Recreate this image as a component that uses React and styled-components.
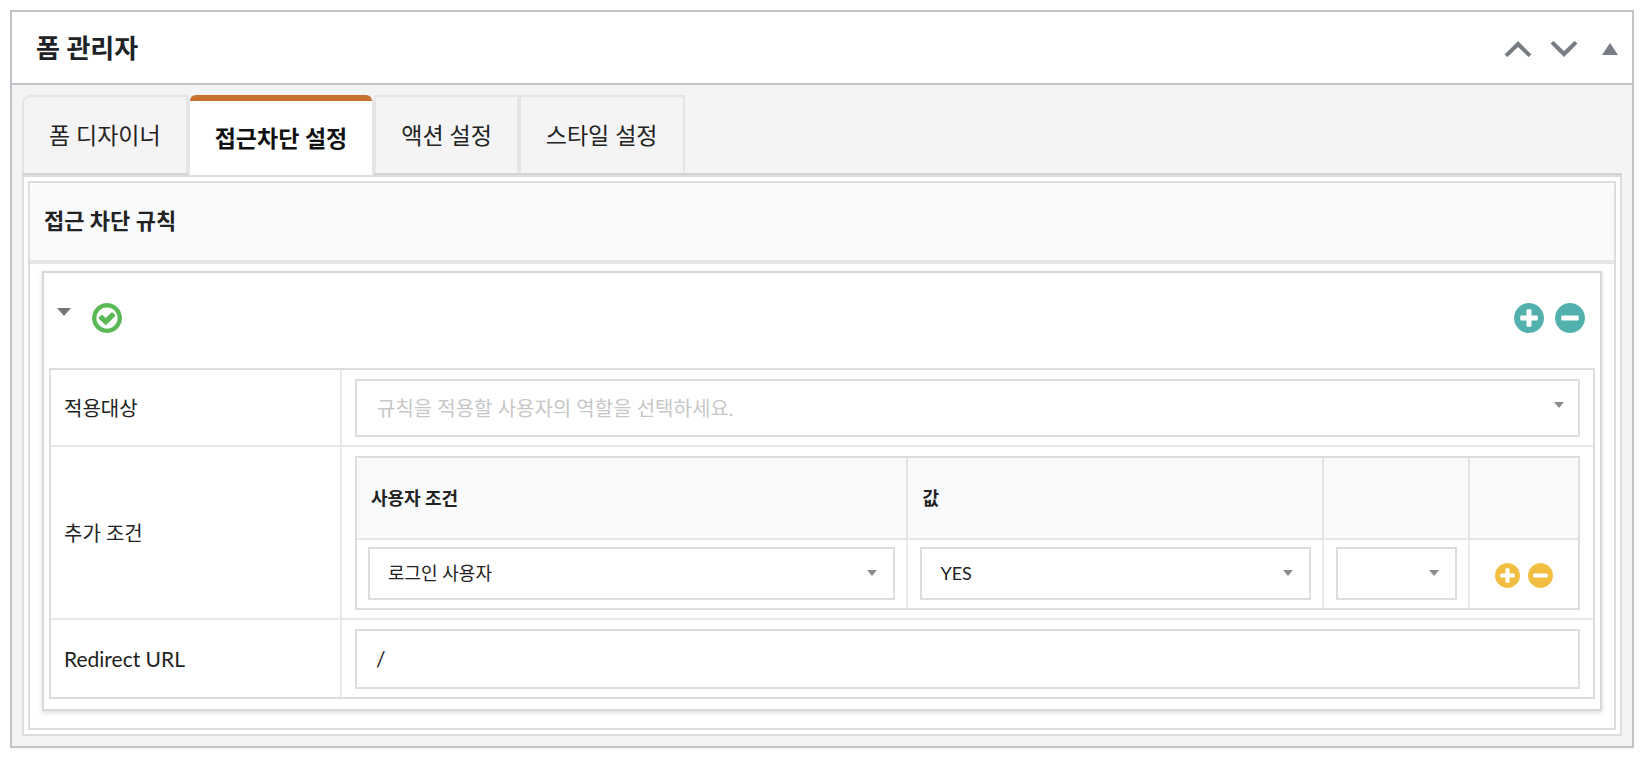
import React, { useState } from 'react';
import styled, { createGlobalStyle, css } from 'styled-components';

const TABS = ['폼 디자이너', '접근차단 설정', '액션 설정', '스타일 설정'];

const CIRCLE = 'q0 209-103 385.5t-279.5 279.5-385.5 103-385.5-103-279.5-279.5-103-385.5 103-385.5 279.5-279.5 385.5-103 385.5 103 279.5 279.5 103 385.5z';
const PLUS = 'M1344 960v-128q0-26-19-45t-45-19h-256v-256q0-26-19-45t-45-19h-128q-26 0-45 19t-19 45v256h-256q-26 0-45 19t-19 45v128q0 26 19 45t45 19h256v256q0 26 19 45t45 19h128q26 0 45-19t19-45v-256h256q26 0 45-19t19-45zm320-64' + CIRCLE;
const MINUS = 'M1344 960v-128q0-26-19-45t-45-19h-768q-26 0-45 19t-19 45v128q0 26 19 45t45 19h768q26 0 45-19t19-45zm320-64' + CIRCLE;
const CHECK = 'M1299 813l-422 422q-19 19-45 19t-45-19l-294-294q-19-19-19-45t19-45l102-102q19-19 45-19t45 19l147 147 275-275q19-19 45-19t45 19l102 102q19 19 19 45t-19 45zm141 83q0-148-73-273t-198-198-273-73-273 73-198 198-73 273 73 273 198 198 273 73 273-73 198-198 73-273zm224 0' + CIRCLE;

const RoundIcon = ({ path, size }) => (
    <svg width={size} height={size} viewBox="128 128 1536 1536" fill="currentColor" aria-hidden="true">
        <path d={path} />
    </svg>
);

const Dropdown = ({ id, label, large, placeholder, options }) => {
    const [value, setValue] = useState(placeholder ? '' : options[0]);

    return (
        <SelectWrap>
            <Select
                id={id}
                aria-label={label}
                $large={large}
                $empty={Boolean(placeholder) && value === ''}
                value={value}
                onChange={(event) => setValue(event.target.value)}
            >
                {placeholder && <option value="" disabled>{placeholder}</option>}
                {options.map((option) => (
                    <option key={option} value={option}>{option}</option>
                ))}
            </Select>
            <Caret $large={large} viewBox="0 0 10 6" aria-hidden="true">
                <path d="M0 0h10L5 6z" />
            </Caret>
        </SelectWrap>
    );
};

const App = () => {
    const [activeTab, setActiveTab] = useState(1);
    const [redirectUrl, setRedirectUrl] = useState('/');

    return (
        <>
            <GlobalStyle />
            <PostBox>
                <BoxHeader>
                    <BoxTitle>폼 관리자</BoxTitle>
                    <HandleActions>
                        <HandleButton type="button" aria-label="위로 이동">
                            <svg width="28" height="16" viewBox="0 0 28 16" fill="currentColor">
                                <path d="M14 0l13.5 13.5-3 2.5L14 6 3.500 16l-3-2.500z" />
                            </svg>
                        </HandleButton>
                        <HandleButton type="button" aria-label="아래로 이동">
                            <svg width="28" height="16" viewBox="0 0 28 16" fill="currentColor">
                                <path d="M14 16l13.500-13.500-3-2.500L14 10 3.500 0l-3 2.500z" />
                            </svg>
                        </HandleButton>
                        <HandleButton type="button" aria-label="접기">
                            <svg width="16" height="12" viewBox="0 0 16 12" fill="currentColor">
                                <path d="M8 0l8 12H0z" />
                            </svg>
                        </HandleButton>
                    </HandleActions>
                </BoxHeader>
                <BoxBody>
                    <TabMenu role="tablist">
                        {TABS.map((tab, index) => (
                            <Tab
                                key={tab}
                                type="button"
                                role="tab"
                                aria-selected={index === activeTab}
                                $active={index === activeTab}
                                onClick={() => setActiveTab(index)}
                            >
                                {tab}
                            </Tab>
                        ))}
                    </TabMenu>
                    <TabPanel role="tabpanel">
                        <RuleBox>
                            <RuleTitle>접근 차단 규칙</RuleTitle>
                            <RuleContent>
                                <Card>
                                    <CardHeader>
                                        <CardButtons $gap={21}>
                                            <IconButton type="button" aria-label="규칙 접기" $color="#767676">
                                                <CollapseIcon viewBox="0 0 14 8" aria-hidden="true">
                                                    <path d="M0 0h14L7 8z" />
                                                </CollapseIcon>
                                            </IconButton>
                                            <IconButton type="button" aria-label="규칙 사용" $color="#5bb955">
                                                <RoundIcon path={CHECK} size={30} />
                                            </IconButton>
                                        </CardButtons>
                                        <CardButtons $gap={11}>
                                            <IconButton type="button" aria-label="규칙 추가" $color="#53b1ad">
                                                <RoundIcon path={PLUS} size={30} />
                                            </IconButton>
                                            <IconButton type="button" aria-label="규칙 삭제" $color="#53b1ad">
                                                <RoundIcon path={MINUS} size={30} />
                                            </IconButton>
                                        </CardButtons>
                                    </CardHeader>
                                    <FieldTable>
                                        <tbody>
                                            <tr>
                                                <LabelCell scope="row"><label htmlFor="roles">적용대상</label></LabelCell>
                                                <FieldCell>
                                                    <Dropdown
                                                        id="roles"
                                                        large
                                                        placeholder="규칙을 적용할 사용자의 역할을 선택하세요."
                                                        options={['관리자', '구독자']}
                                                    />
                                                </FieldCell>
                                            </tr>
                                            <tr>
                                                <LabelCell scope="row">추가 조건</LabelCell>
                                                <FieldCell>
                                                    <ConditionTable>
                                                        <colgroup>
                                                            <Col $width="45%" />
                                                            <Col />
                                                            <Col $width="146px" />
                                                            <Col $width="110px" />
                                                        </colgroup>
                                                        <thead>
                                                            <tr>
                                                                <ConditionHead scope="col">사용자 조건</ConditionHead>
                                                                <ConditionHead scope="col">값</ConditionHead>
                                                                <ConditionHead as="td" />
                                                                <ConditionHead as="td" />
                                                            </tr>
                                                        </thead>
                                                        <tbody>
                                                            <tr>
                                                                <ConditionCell>
                                                                    <Dropdown label="사용자 조건" options={['로그인 사용자', '사용자 역할']} />
                                                                </ConditionCell>
                                                                <ConditionCell>
                                                                    <Dropdown label="값" options={['YES', 'NO']} />
                                                                </ConditionCell>
                                                                <ConditionCell>
                                                                    <Dropdown label="연산자" options={['', 'AND', 'OR']} />
                                                                </ConditionCell>
                                                                <ConditionCell>
                                                                    <RowButtons>
                                                                        <IconButton type="button" aria-label="조건 추가" $color="#f2be42">
                                                                            <RoundIcon path={PLUS} size={25} />
                                                                        </IconButton>
                                                                        <IconButton type="button" aria-label="조건 삭제" $color="#f2be42">
                                                                            <RoundIcon path={MINUS} size={25} />
                                                                        </IconButton>
                                                                    </RowButtons>
                                                                </ConditionCell>
                                                            </tr>
                                                        </tbody>
                                                    </ConditionTable>
                                                </FieldCell>
                                            </tr>
                                            <tr>
                                                <LabelCell scope="row"><LatinLabel htmlFor="redirect">Redirect URL</LatinLabel></LabelCell>
                                                <FieldCell>
                                                    <Input
                                                        id="redirect"
                                                        type="text"
                                                        value={redirectUrl}
                                                        onChange={(event) => setRedirectUrl(event.target.value)}
                                                    />
                                                </FieldCell>
                                            </tr>
                                        </tbody>
                                    </FieldTable>
                                </Card>
                            </RuleContent>
                        </RuleBox>
                    </TabPanel>
                </BoxBody>
            </PostBox>
        </>
    );
};

const GlobalStyle = createGlobalStyle`
  *, *::before, *::after {
    box-sizing: border-box;
  }
  body {
    margin: 0;
    padding: 10px;
    background-color: #fff;
    color: #222;
    font-family: Lato, "Noto Sans CJK KR", sans-serif;
    font-size: 20px;
    line-height: 28px;
  }
  button, input, select {
    font-family: inherit;
    color: inherit;
    margin: 0;
  }
`;

const PostBox = styled.section`
  border: 2px solid #c3c4c9;
  box-shadow: 0 2px 2px rgba(0, 0, 0, 0.04);
  background-color: #f4f4f4;
`;

const BoxHeader = styled.header`
  display: flex;
  align-items: center;
  justify-content: space-between;
  height: 73px;
  padding: 0 14px 0 24px;
  background-color: #fff;
  border-bottom: 2px solid #c3c4c9;
`;

const BoxTitle = styled.h2`
  margin: 0;
  color: #1d2327;
  font-size: 26px;
  font-weight: 600;
`;

const HandleActions = styled.div`
  display: flex;
  align-items: center;
  gap: 18px;
  padding-top: 2px;
  color: #787c84;

  & > :last-child {
    margin-left: 6px;
  }
`;

const HandleButton = styled.button`
  display: flex;
  padding: 0;
  border: none;
  background: none;
  cursor: pointer;
`;

const BoxBody = styled.div`
  padding: 10px;
`;

const TabMenu = styled.div`
  display: flex;
  height: 80px;
  border-bottom: 2px solid #d4d4d5;
`;

const Tab = styled.button`
  padding: 0 25px;
  border: 2px solid #e5e5e5;
  border-bottom: none;
  background-color: transparent;
  color: #222;
  font-size: 23px;
  line-height: 36px;
  cursor: pointer;

  &:first-child {
    border-top-left-radius: 8px;
  }

  ${({ $active }) => $active && css`
    margin: 0 2px -2px;
    border: none;
    border-top: 6px solid #c87030;
    border-radius: 6px 6px 0 0;
    box-shadow: -2px 0 0 #e5e5e5, 2px 0 0 #e5e5e5;
    background-color: #fff;
    color: #111;
    font-weight: 700;
  `}
`;

const TabPanel = styled.div`
  padding: 4px;
  border: 2px solid #ddd;
  background-color: #fff;
`;

const RuleBox = styled.div`
  border: 2px solid #ddd;
`;

const RuleTitle = styled.h3`
  display: flex;
  align-items: center;
  height: 81px;
  margin: 0;
  padding: 0 14px 2px;
  border-bottom: 4px solid #e6e6e6;
  border-radius: 6px 6px 0 0;
  background-color: #f9fafc;
  font-size: 22px;
  font-weight: 700;
`;

const RuleContent = styled.div`
  padding: 7px 12px 17px;
`;

const Card = styled.div`
  padding: 0 5px 10px;
  border: 2px solid #d8d8d8;
  box-shadow: 0 2px 4px rgba(34, 36, 38, 0.15);
`;

const CardHeader = styled.div`
  display: flex;
  justify-content: space-between;
  height: 95px;
  padding: 30px 10px 0 8px;
`;

const CardButtons = styled.div`
  display: flex;
  align-items: flex-start;
  gap: ${({ $gap }) => $gap}px;
`;

const IconButton = styled.button`
  display: flex;
  padding: 0;
  border: none;
  background: none;
  cursor: pointer;

  && {
    color: ${({ $color }) => $color};
  }
`;

const CollapseIcon = styled.svg`
  width: 14px;
  height: 8px;
  margin-top: 5px;
  fill: currentColor;
`;

const FieldTable = styled.table`
  width: 100%;
  table-layout: fixed;
  border: 2px solid #ddd;
  border-collapse: separate;
  border-spacing: 0;
`;

const LabelCell = styled.th`
  width: 289px;
  padding: 0 13px;
  text-align: left;
  font-weight: 400;

  tr + tr > & {
    border-top: 2px solid #e8e8e8;
  }
`;

const LatinLabel = styled.label`
  font-size: 21px;
`;

const FieldCell = styled.td`
  padding: 9px 13px 8px;
  border-left: 2px solid #e8e8e8;

  tr + tr > & {
    border-top: 2px solid #e8e8e8;
  }
`;

const ConditionTable = styled.table`
  width: 100%;
  table-layout: fixed;
  border: 2px solid #ddd;
  border-collapse: separate;
  border-spacing: 0;
  font-size: 18px;
`;

const Col = styled.col`
  width: ${({ $width }) => $width || 'auto'};
`;

const ConditionHead = styled.th`
  height: 82px;
  padding: 0 14px;
  border-bottom: 2px solid #e5e5e5;
  background-color: #f9fafc;
  text-align: left;
  font-weight: 700;

  & + & {
    border-left: 2px solid #e5e5e5;
  }
  &:first-child {
    border-top-left-radius: 6px;
  }
  &:last-child {
    border-top-right-radius: 6px;
  }
`;

const ConditionCell = styled.td`
  padding: 7px 11px 8px;

  & + & {
    padding-left: 12px;
    border-left: 2px solid #e8e8e8;
  }
`;

const RowButtons = styled.div`
  display: flex;
  justify-content: center;
  gap: 8px;
  padding: 4px 2px 0 0;
`;

const SelectWrap = styled.div`
  position: relative;
`;

const Select = styled.select`
  display: block;
  width: 100%;
  height: ${({ $large }) => ($large ? 58 : 53)}px;
  padding: ${({ $large }) => ($large ? '0 40px 0 20px' : '0 40px 2px 18px')};
  border: 2px solid #ddd;
  border-radius: 0;
  background-color: #fff;
  font-size: ${({ $large }) => ($large ? 20 : 18)}px;
  appearance: none;

  && {
    color: ${({ $empty }) => ($empty ? '#c7c7c7' : '#222')};
  }
`;

const Caret = styled.svg`
  position: absolute;
  top: 23px;
  right: ${({ $large }) => ($large ? 16 : 18)}px;
  width: 10px;
  height: 6px;
  fill: #8c8c8c;
  pointer-events: none;
`;

const Input = styled.input`
  display: block;
  width: 100%;
  height: 60px;
  padding: 0 19px 2px;
  border: 2px solid #ddd;
  border-radius: 0;
  background-color: #fff;
  font-size: 21px;
`;

export default App;
